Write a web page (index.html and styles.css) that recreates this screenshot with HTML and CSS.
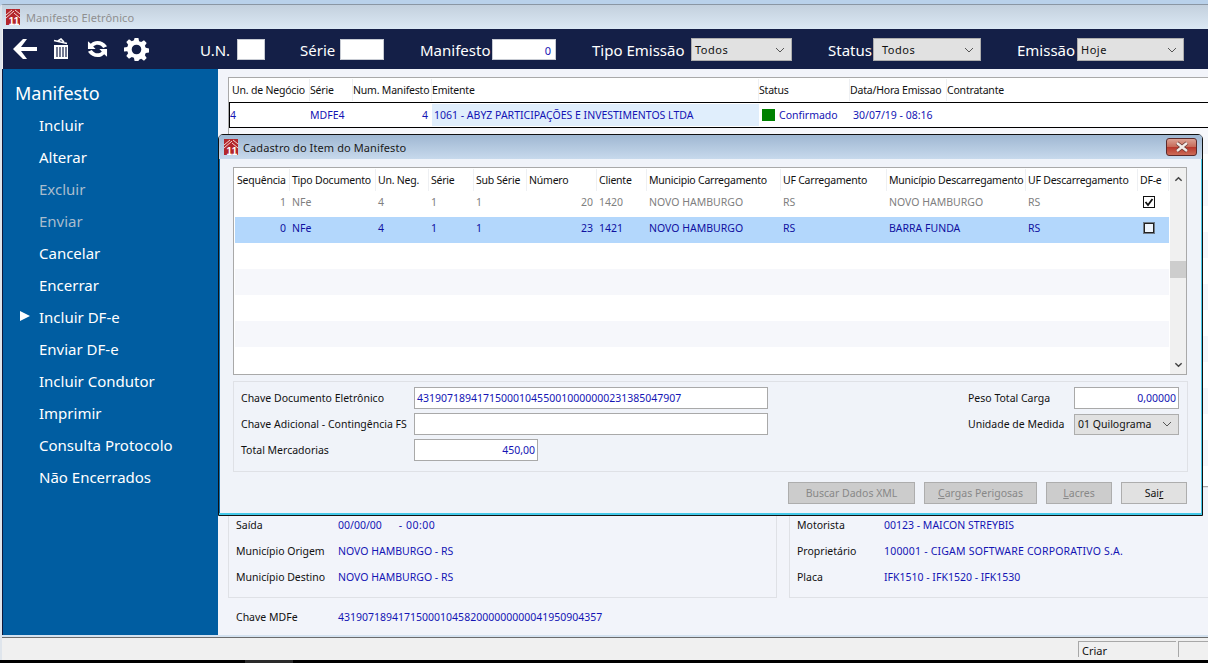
FILE: index.html
```html
<!DOCTYPE html>
<html lang="pt-BR">
<head>
<meta charset="utf-8">
<title>Manifesto Eletrônico</title>
<link rel="stylesheet" href="styles.css">
</head>
<body>
<div class="desktop-strip"></div>
<div class="app">
  <header class="titlebar">
    <svg class="logo" viewBox="0 0 14 16"><rect width="14" height="16" fill="#b3262b"/><path d="M0 6 6 1M0 9 8 2M9 1l5 4M8 4l6 5" fill="none" stroke="#f3d7d2" stroke-width="1"/><text x="8" y="15.500" class="logo-num">11</text></svg>
    <span class="title-text">Manifesto Eletrônico</span>
  </header>
  <nav class="toolbar">
    <div class="tools">
      <svg class="ic-back" viewBox="0 0 26 22"><path d="M11 1 1 11l10 10h4l-6-8h16V9H9l6-8z" fill="#fff"/></svg>
      <svg class="ic-trash" viewBox="0 0 17 22"><path d="M2 2.500l13 3M6 3l3-2 3 3" fill="none" stroke="#fff" stroke-width="1.600"/><path d="M2 7h14v14H2z" fill="#fff"/><path d="M5 9v10M8 9v10M11 9v10M14 9v10" stroke="#141f47" stroke-width="1.200"/></svg>
      <svg class="ic-sync" viewBox="0 0 22 18"><path d="M1 1v8h8L6.500 6.500C8 5 9.500 4.500 11 4.500c2.500 0 4 1 6 3.500l4-2C18 2 15 .5 11 .5 8 .5 6 1.500 4 3.500zM21 17V9h-8l2.500 2.500C14 13 12.500 13.500 11 13.500c-2.500 0-4-1-6-3.500l-4 2c3 4 6 5.500 10 5.500 3 0 5-1 7-3z" fill="#fff"/></svg>
      <svg class="ic-gear" viewBox="0 0 26 26"><path d="M11 1h4l.7 3.400 2.200.9 2.900-1.900 2.800 2.800-1.900 2.900.9 2.200 3.400.7v4l-3.400.7-.9 2.200 1.900 2.900-2.800 2.800-2.900-1.900-2.200.9L15 25h-4l-.7-3.400-2.200-.9-2.900 1.900-2.800-2.800 1.900-2.900-.9-2.200L0 15v-4l3.400-.7.9-2.200L2.400 5.200l2.800-2.800 2.900 1.900 2.200-.9zM13 8a5 5 0 1 0 0 10 5 5 0 0 0 0-10z" fill="#fff" fill-rule="evenodd"/></svg>
    </div>
    <label class="tb-label l-un">U.N.</label><span class="tb-input i-un"></span>
    <label class="tb-label l-serie">Série</label><span class="tb-input i-serie"></span>
    <label class="tb-label l-man">Manifesto</label><span class="tb-input i-man">0</span>
    <label class="tb-label l-tipo">Tipo Emissão</label><span class="tb-select s-tipo">Todos<svg class="chev" viewBox="0 0 10 6"><path d="M1 1l4 4 4-4" fill="none" stroke="#555"/></svg></span>
    <label class="tb-label l-status">Status</label><span class="tb-select s-status">Todos<svg class="chev" viewBox="0 0 10 6"><path d="M1 1l4 4 4-4" fill="none" stroke="#555"/></svg></span>
    <label class="tb-label l-emis">Emissão</label><span class="tb-select s-emis">Hoje<svg class="chev" viewBox="0 0 10 6"><path d="M1 1l4 4 4-4" fill="none" stroke="#555"/></svg></span>
  </nav>
  <div class="workspace">
    <aside class="sidebar">
      <h1 class="side-title">Manifesto</h1>
      <ul class="menu">
        <li>Incluir</li>
        <li>Alterar</li>
        <li class="off">Excluir</li>
        <li class="off">Enviar</li>
        <li>Cancelar</li>
        <li>Encerrar</li>
        <li class="current">Incluir DF-e</li>
        <li>Enviar DF-e</li>
        <li>Incluir Condutor</li>
        <li>Imprimir</li>
        <li>Consulta Protocolo</li>
        <li>Não Encerrados</li>
      </ul>
    </aside>
    <main class="content">
      <section class="main-grid">
        <div class="mg-row mg-head">
          <span>Un. de Negócio</span><span>Série</span><span>Num. Manifesto</span><span>Emitente</span><span>Status</span><span>Data/Hora Emissao</span><span>Contratante</span>
        </div>
        <div class="mg-row mg-sel">
          <span>4</span><span>MDFE4</span><span class="num">4</span><span class="hl">1061 - ABYZ PARTICIPAÇÕES E INVESTIMENTOS LTDA</span><span class="st"><i class="sq"></i>Confirmado</span><span class="pl">30/07/19 - 08:16</span><span></span>
        </div>
        <div class="mg-bands">
          <div class="b"></div><div></div><div class="b"></div><div></div><div class="b"></div><div></div><div class="b"></div><div></div><div class="b"></div><div></div><div class="b"></div><div></div><div class="b"></div><div></div>
        </div>
      </section>
      <section class="details">
        <div class="panel p-left">
          <div class="drow"><span class="dl">Saída</span><span class="dv">00/00/00<span class="time">- 00:00</span></span></div>
          <div class="drow"><span class="dl">Município Origem</span><span class="dv">NOVO HAMBURGO - RS</span></div>
          <div class="drow"><span class="dl">Município Destino</span><span class="dv">NOVO HAMBURGO - RS</span></div>
        </div>
        <div class="panel p-right">
          <div class="drow"><span class="dl">Motorista</span><span class="dv">00123 - MAICON STREYBIS</span></div>
          <div class="drow"><span class="dl">Proprietário</span><span class="dv wide">100001 - CIGAM SOFTWARE CORPORATIVO S.A.</span></div>
          <div class="drow"><span class="dl">Placa</span><span class="dv">IFK1510 - IFK1520 - IFK1530</span></div>
        </div>
      </section>
      <div class="chave"><span class="dl">Chave MDFe</span><span class="dv">43190718941715000104582000000000041950904357</span></div>
    </main>
  </div>
  <footer class="statusbar">
    <span class="sb-cell sb-criar">Criar</span><span class="sb-cell sb-last"></span>
  </footer>
</div>
<div class="taskbar"><span class="task-item"></span></div>

<section class="dialog">
  <header class="dlg-title">
    <svg class="logo" viewBox="0 0 14 16"><rect width="14" height="16" fill="#b3262b"/><path d="M0 6 6 1M0 9 8 2M9 1l5 4M8 4l6 5" fill="none" stroke="#f3d7d2" stroke-width="1"/><text x="8" y="15.500" class="logo-num">11</text></svg>
    <span class="dlg-text">Cadastro do Item do Manifesto</span>
    <button class="close-btn" aria-label="Fechar"><svg viewBox="0 0 16 12"><path d="M3 2l10 8M13 2 3 10" stroke="#6b3a34" stroke-width="4"/><path d="M3 2l10 8M13 2 3 10" stroke="#f2ece8" stroke-width="2.400"/></svg></button>
  </header>
  <div class="dlg-body">
    <div class="item-grid">
      <div class="ig-table">
        <div class="ig-row ig-head">
          <span>Sequência</span><span>Tipo Documento</span><span>Un. Neg.</span><span>Série</span><span>Sub Série</span><span>Número</span><span>Cliente</span><span>Municipio Carregamento</span><span>UF Carregamento</span><span>Município Descarregamento</span><span>UF Descarregamento</span><span>DF-e</span>
        </div>
        <div class="ig-row ig-first">
          <span class="num">1</span><span>NFe</span><span>4</span><span>1</span><span>1</span><span class="num">20</span><span>1420</span><span>NOVO HAMBURGO</span><span>RS</span><span>NOVO HAMBURGO</span><span>RS</span><span class="chk"><svg viewBox="0 0 12 12"><rect x=".5" y=".5" width="11" height="11" fill="#fff" stroke="#111"/><path d="M2.500 6l2.500 3 4.500-6" fill="none" stroke="#111" stroke-width="1.800"/></svg></span>
        </div>
        <div class="ig-row ig-sel">
          <span class="num">0</span><span>NFe</span><span>4</span><span>1</span><span>1</span><span class="num">23</span><span>1421</span><span>NOVO HAMBURGO</span><span>RS</span><span>BARRA FUNDA</span><span>RS</span><span class="chk"><svg viewBox="0 0 12 12"><rect x=".5" y=".5" width="11" height="11" fill="#eef5fd" stroke="#111" stroke-dasharray="1 1"/><rect x="1.500" y="1.500" width="9" height="9" fill="none" stroke="#222"/></svg></span>
        </div>
        <div class="ig-empty"></div><div class="ig-empty b"></div><div class="ig-empty"></div><div class="ig-empty b"></div><div class="ig-empty"></div>
      </div>
      <div class="scrollbar">
        <svg viewBox="0 0 10 6"><path d="M1.500 5 5 1.500 8.500 5" fill="none" stroke="#444" stroke-width="1.600"/></svg>
        <span class="thumb"></span>
        <svg viewBox="0 0 10 6"><path d="M1.500 1 5 4.500 8.500 1" fill="none" stroke="#444" stroke-width="1.600"/></svg>
      </div>
    </div>
    <div class="form-panel">
      <div class="form-left">
        <div class="frow"><label>Chave Documento Eletrônico</label><span class="inp i-wide">43190718941715000104550010000000231385047907</span></div>
        <div class="frow"><label>Chave Adicional - Contingência FS</label><span class="inp i-wide"></span></div>
        <div class="frow"><label>Total Mercadorias</label><span class="inp i-total">450,00</span></div>
      </div>
      <div class="form-right">
        <div class="frow"><label>Peso Total Carga</label><span class="inp i-peso">0,00000</span></div>
        <div class="frow"><label>Unidade de Medida</label><span class="sel">01 Quilograma<svg class="chev" viewBox="0 0 10 6"><path d="M1 1l4 4 4-4" fill="none" stroke="#555"/></svg></span></div>
      </div>
    </div>
    <div class="btn-row">
      <span class="btn dis b-xml">Buscar Dados XML</span>
      <span class="btn dis b-cargas"><u>C</u>argas Perigosas</span>
      <span class="btn dis b-lacres"><u>L</u>acres</span>
      <span class="btn b-sair">Sai<u>r</u></span>
    </div>
  </div>
</section>
</body>
</html>
```

FILE: styles.css
```css
* { box-sizing: border-box; }
html, body { margin: 0; padding: 0; }
body {
  width: 1208px; height: 663px; overflow: hidden; position: relative;
  background: #b9d1ea;
  font-family: "Noto Sans", "Open Sans", sans-serif;
  font-size: 10.5px; color: #111;
}
.desktop-strip { height: 4px; background: #b9d1ea; }
.app { height: 656px; background: #f0f0f0; border-top: 1px solid #8a96a3; border-left: 2px solid #dfe5ec; display: flex; flex-direction: column; border-top-left-radius: 4px; }
.titlebar { height: 24px; flex: none; display: flex; align-items: center; gap: 6px; padding-left: 4px; background: linear-gradient(#c3d0dd, #dbe8f4); }
.logo { width: 14px; height: 16px; flex: none; }
.logo-num { font-family: "Liberation Sans", sans-serif; font-size: 10px; font-weight: 700; fill: #fff; text-anchor: middle; }
.title-text { color: #8f8f8f; font-size: 11px; letter-spacing: .1px; }

.toolbar { height: 40px; flex: none; background: #141f47; margin-left: 1px; display: flex; align-items: center; color: #fff; }
.tools { width: 197px; display: flex; align-items: center; flex: none; padding-left: 9px; }
.ic-back { width: 26px; height: 22px; }
.ic-trash { width: 17px; height: 22px; margin-left: 14px; }
.ic-sync { width: 21px; height: 18px; margin-left: 18px; }
.ic-gear { width: 25px; height: 25px; margin-left: 16px; }
.tb-label { font-size: 15px; flex: none; padding-top: 1px; }
.tb-input { height: 21px; background: #fff; border: 1px solid #c7cbd3; flex: none; color: #1414b4; font-size: 11px; text-align: right; padding-right: 4px; line-height: 21px; }
.tb-select { height: 23px; background: #e1e1e1; border: 1px solid #adadad; color: #111; font-size: 11px; letter-spacing: .5px; display: flex; align-items: center; justify-content: space-between; padding: 1px 6px 0 3px; flex: none; }
.chev { width: 10px; height: 6px; }
.l-un { width: 37px; } .i-un { width: 28px; }
.l-serie { width: 40px; margin-left: 35px; } .i-serie { width: 44px; }
.l-man { width: 72px; margin-left: 36px; } .i-man { width: 64px; }
.l-tipo { width: 99px; margin-left: 36px; } .s-tipo { width: 101px; }
.l-status { width: 45px; margin-left: 36px; } .s-status { width: 108px; padding-left: 8px; }
.l-emis { width: 60px; margin-left: 36px; } .s-emis { width: 107px; }

.workspace { flex: 1; min-height: 0; display: flex; border-bottom: 2px solid #d4e2f0; }
.sidebar { width: 216px; flex: none; background: #005da1; border-left: 1px solid #10183a; color: #fff; padding: 12px 0 0 12px; }
.side-title { margin: 0; font-size: 18px; font-weight: 400; line-height: 24px; }
.menu { list-style: none; margin: 4px 0 0; padding: 0 0 0 24px; }
.menu li { font-size: 15px; height: 32px; line-height: 32px; position: relative; }
.menu .off { color: #a9bccd; }
.menu .current::before { content: ""; position: absolute; left: -19px; top: 10px; border-left: 10px solid #fff; border-top: 5px solid transparent; border-bottom: 5px solid transparent; }

.content { flex: 1; min-width: 0; background: #f2f4fa; padding: 8px 0 0 10px; }
.main-grid { height: 410px; background: #fff; border-top: 1px solid #a9a9a9; border-left: 1px solid #a9a9a9; border-bottom: 1px solid #a9a9a9; }
.mg-row { display: grid; grid-template-columns: 80px 43px 79px 327px 91px 97px 1fr; align-items: center; }
.mg-head { height: 24px; letter-spacing: -.2px; }
.mg-head span { height: 22px; line-height: 22px; border-left: 1px solid #eef0f3; white-space: nowrap; }
.mg-head span:first-child { border-left: 0; padding-left: 3px; }
.mg-sel { height: 26px; border-style: solid; border-color: #000; border-width: 1.500px 0 1.500px 1px; color: #1414b4; white-space: nowrap; padding-bottom: 1px; }
.mg-sel .pl { padding-left: 3px; }
.num { text-align: right; }
.mg-sel .num { padding-right: 4px; }
.hl { background: #e0eefc; height: 22px; line-height: 22px; padding-left: 2px; }
.st { display: flex; align-items: center; gap: 4px; padding-left: 3px; }
.sq { width: 13px; height: 12px; background: #008000; display: block; }
.mg-bands { height: 359px; overflow: hidden; }
.mg-bands div { height: 26px; }
.mg-bands .b { background: #f6f7fb; }

.details { display: grid; grid-template-columns: 549px 419px; gap: 12px; height: 111px; }
.panel { border: 1px solid #dfe1e6; padding: 24px 0 0 7px; }
.p-right { border-right: 0; }
.drow { display: flex; height: 26px; align-items: center; white-space: nowrap; }
.drow .dl { width: 102px; flex: none; }
.p-right .dl { width: 87px; }
.dv { color: #1414b4; }
.dv.wide { letter-spacing: .2px; }
.time { margin-left: 17px; letter-spacing: .5px; }
.chave { display: flex; padding: 9px 0 0 8px; align-items: center; height: 29px; }
.chave .dl { width: 102px; }

.statusbar { height: 23px; flex: none; background: #f0f0f0; border-top: 1px solid #6b6b6b; display: flex; justify-content: flex-end; padding-top: 3px; gap: 2px; }
.sb-cell { height: 16px; border-top: 1px solid #a8a8a8; border-left: 1px solid #a8a8a8; padding-left: 3px; line-height: 17px; font-size: 11px; }
.sb-criar { width: 98px; }
.sb-last { width: 30px; }
.taskbar { height: 3px; background: #000; }
.task-item { display: block; width: 48px; height: 3px; margin-left: 245px; background: #2a2a2a; }

.dialog { position: absolute; left: 218px; top: 134px; width: 985px; height: 382px; background: #f0f3f9; border: 1px solid #111; border-radius: 5px 5px 0 0; box-shadow: inset -1px -2px 0 #44c8e8, inset 1px 0 0 #0f6fb0; display: flex; flex-direction: column; }
.dlg-title { height: 24px; flex: none; display: flex; align-items: center; gap: 5px; padding-left: 5px; background: linear-gradient(#9fb7d2, #c7d9ec); font-size: 11px; letter-spacing: .1px; position: relative; border-radius: 3px 3px 0 0; }
.dlg-text { color: #1a1a1a; }
.close-btn { position: absolute; right: 5px; top: 3px; width: 31px; height: 18px; border: 1px solid #5c2a2a; border-radius: 3px; background: linear-gradient(#dca294 0, #c66a58 50%, #b8382c 52%, #cc6c58 100%); padding: 0; display: flex; align-items: center; justify-content: center; }
.close-btn svg { width: 16px; height: 12px; }
.dlg-body { flex: 1; padding: 8px 14px 0 14px; }

.item-grid { width: 954px; height: 208px; border: 1px solid #a9a9a9; background: #fff; display: flex; }
.ig-table { width: 934px; flex: none; margin-left: 1px; }
.ig-row { display: grid; grid-template-columns: 55px 86px 53px 45px 53px 70px 50px 134px 106px 139px 112px 31px; align-items: center; white-space: nowrap; }
.ig-head { height: 23px; letter-spacing: -.22px; }
.ig-head span { height: 22px; line-height: 22px; padding-left: 2px; border-right: 1px solid #eef0f3; }
.ig-first, .ig-sel { height: 26px; }
.ig-first > span, .ig-sel > span { padding-left: 2px; padding-bottom: 4px; }
.ig-first > .num, .ig-sel > .num { padding-right: 4px; }
.ig-first { color: #808080; }
.ig-sel { background: #b3d7fc; color: #1010a0; }
.ig-empty { height: 26px; }
.ig-empty.b { background: #f6f7fb; }
.ig-first > .chk, .ig-sel > .chk { display: flex; align-items: center; padding-left: 5px; }
.chk svg { width: 12px; height: 12px; }
.scrollbar { flex: 1; background: #f0f0f0; display: flex; flex-direction: column; justify-content: space-between; align-items: center; padding: 8px 0 6px; position: relative; margin-left: 1px; }
.scrollbar svg { width: 9px; height: 6px; }
.thumb { position: absolute; left: 0; right: 0; top: 93px; height: 17px; background: #cdcdcd; }

.form-panel { width: 955px; height: 91px; margin-top: 6px; border: 1px solid #dfe1e6; padding: 3px 8px 0 7px; display: flex; justify-content: space-between; }
.frow { display: flex; align-items: center; height: 26px; white-space: nowrap; }
.form-left label { width: 173px; flex: none; }
.form-right label { width: 106px; flex: none; }
.inp { height: 22px; background: #fff; border: 1px solid #a9a9a9; color: #1414b4; line-height: 20px; padding: 0 2px; display: block; }
.i-wide { width: 354px; }
.i-total { width: 124px; text-align: right; }
.i-peso { width: 105px; text-align: right; }
.sel { width: 105px; height: 21px; background: #e1e1e1; border: 1px solid #adadad; display: flex; align-items: center; justify-content: space-between; padding: 0 6px 0 3px; }

.btn-row { display: flex; justify-content: flex-end; gap: 9px; margin-top: 10px; width: 954px; }
.btn { height: 22px; line-height: 20px; text-align: center; background: #e1e1e1; border: 1px solid #adadad; }
.btn.dis { background: #ccc; color: #888; }
.b-xml { width: 127px; } .b-cargas { width: 113px; } .b-lacres { width: 66px; } .b-sair { width: 66px; }
```
